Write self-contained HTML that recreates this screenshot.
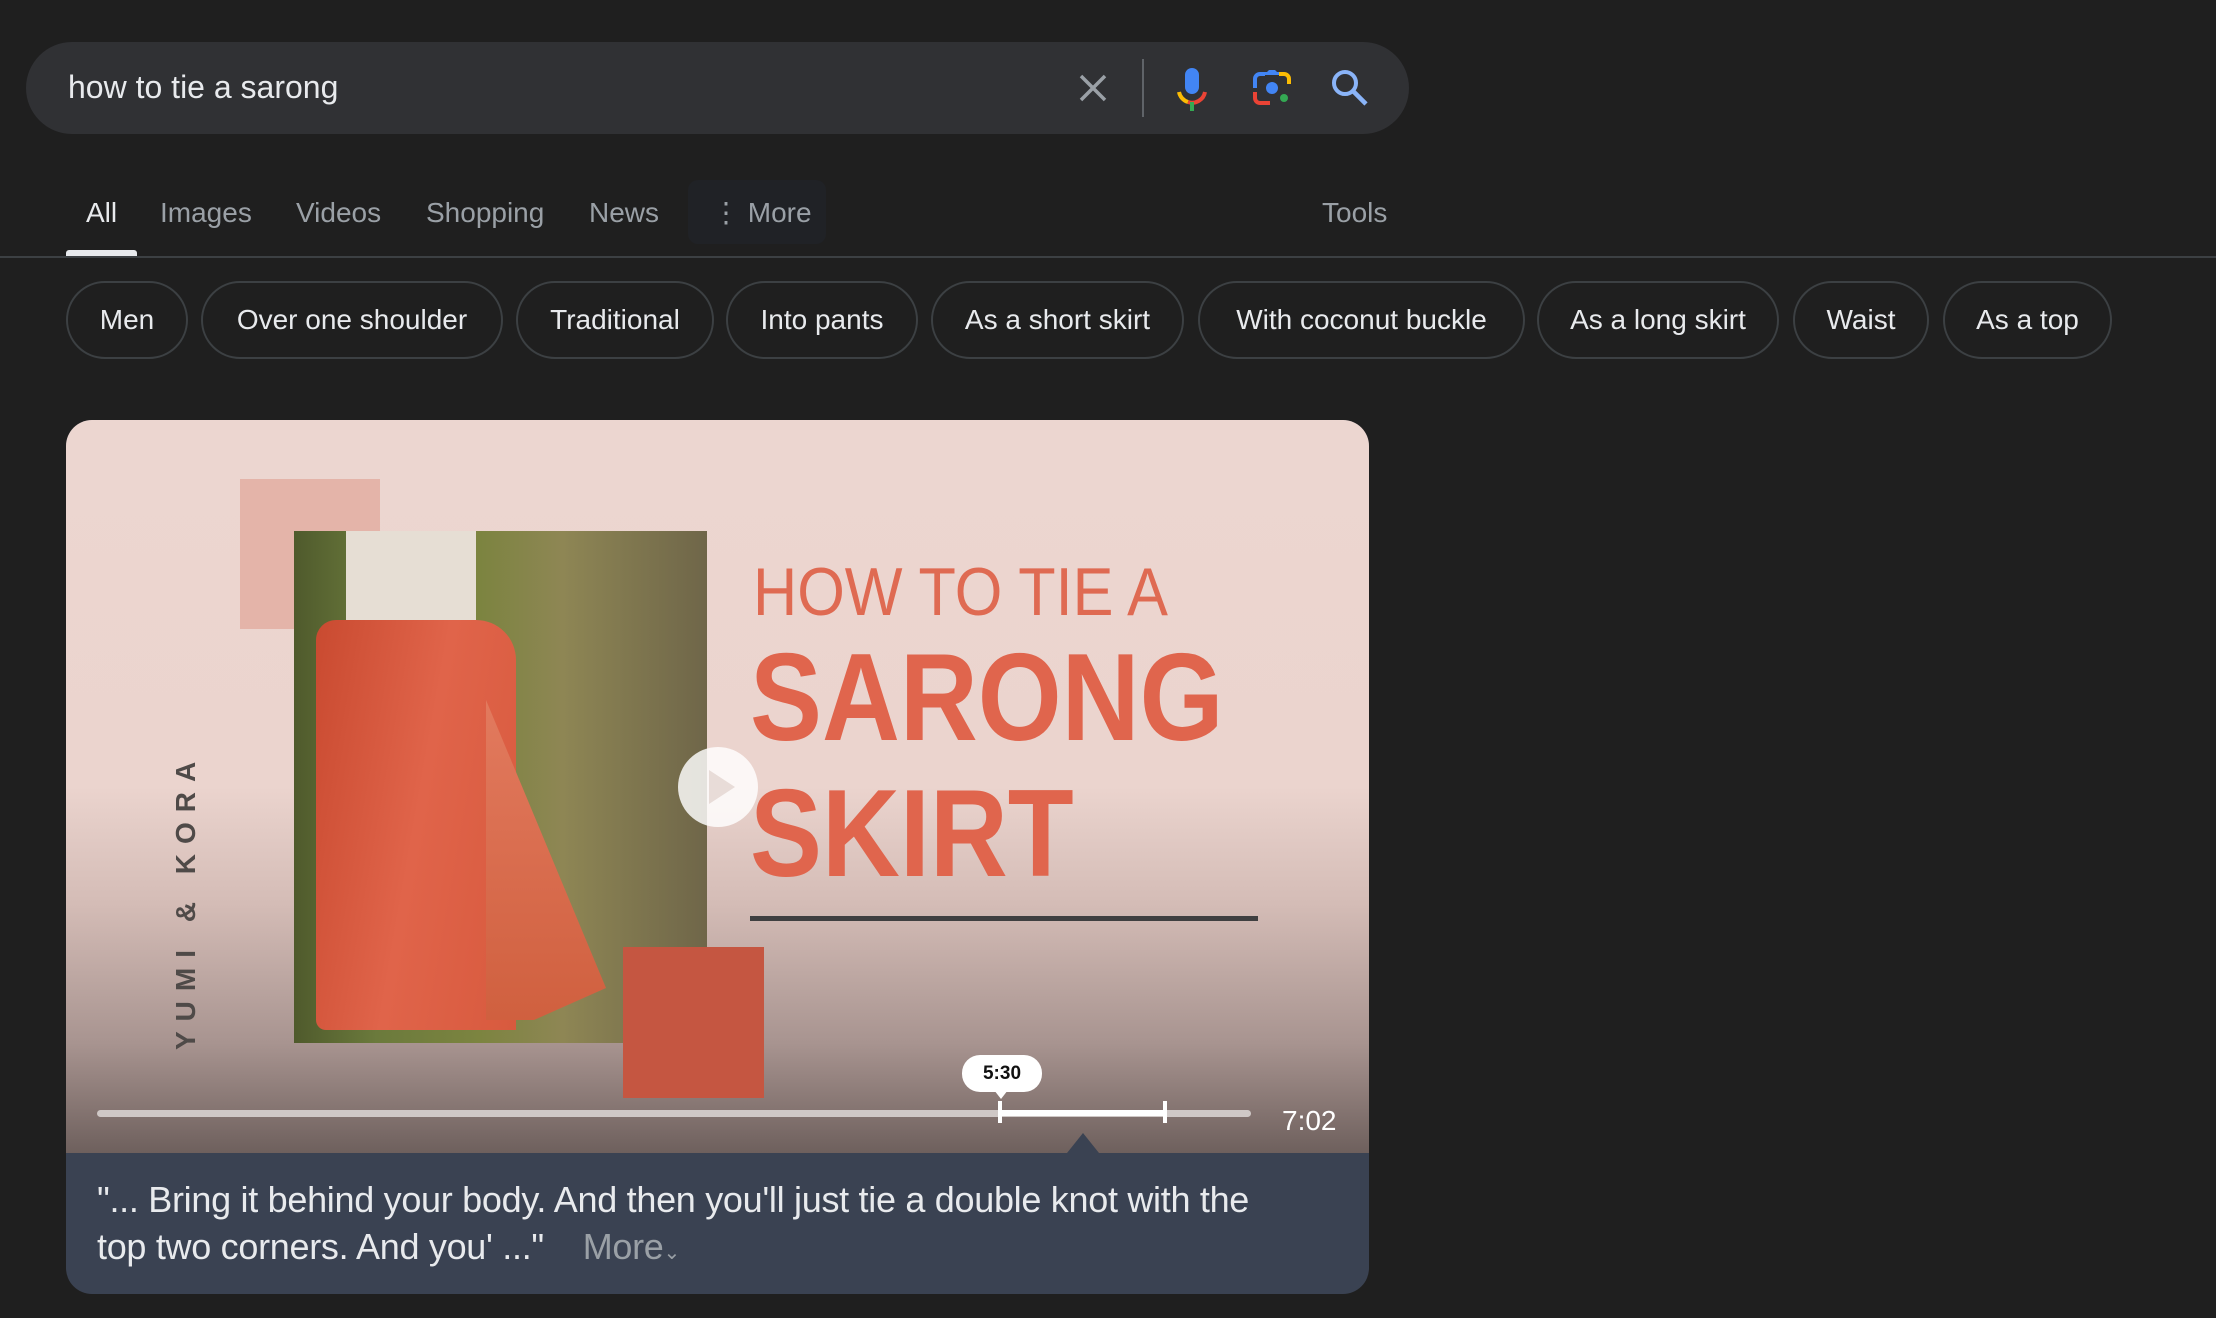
<!DOCTYPE html>
<html><head><meta charset="utf-8"><style>
*{box-sizing:border-box;margin:0;padding:0}
body{width:2216px;height:1318px;background:#1f1f1f;font-family:"Liberation Sans",Arial,sans-serif;position:relative;overflow:hidden;color:#e8eaed}
.abs{position:absolute}
.bar{left:26px;top:42px;width:1383px;height:92px;border-radius:46px;background:#303134}
.q{left:68px;top:66px;font-size:32px;color:#e8eaed;line-height:42px}
.tab{position:absolute;top:194px;font-size:28px;color:#9aa0a6;line-height:38px}
.chip{position:absolute;top:281px;height:78px;border:2px solid #3c4043;border-radius:39px;font-size:28px;color:#e8eaed;display:flex;align-items:center;justify-content:center}
</style></head><body>
<div class="abs bar"></div>
<div class="abs q">how to tie a sarong</div>
<svg class="abs" style="left:1077px;top:72px" width="32" height="32" viewBox="0 0 32 32"><path d="M4 4L28 28M28 4L4 28" stroke="#9aa0a6" stroke-width="3.5"/></svg>
<div class="abs" style="left:1142px;top:59px;width:2px;height:58px;background:#5f6368"></div>
<svg class="abs" style="left:1176px;top:66px" width="32" height="46" viewBox="0 0 32 46">
<rect x="9" y="2" width="14" height="26" rx="7" fill="#4285f4"/>
<path d="M3 26a13 13 0 0 0 9 10" stroke="#fbbc04" stroke-width="4" fill="none"/>
<path d="M12 36a13 13 0 0 0 17-10" stroke="#ea4335" stroke-width="4" fill="none"/>
<rect x="14" y="36" width="4" height="9" fill="#34a853"/></svg>
<svg class="abs" style="left:1252px;top:68px" width="40" height="40" viewBox="0 0 40 40">
<path d="M3 20V11a5 5 0 0 1 5-5h5" stroke="#4285f4" stroke-width="4" fill="none"/>
<path d="M13 6l4-4h6l4 4" fill="#4285f4"/><rect x="12" y="4" width="15" height="3" fill="#4285f4"/>
<path d="M27 6h5a5 5 0 0 1 5 5v5" stroke="#fbbc04" stroke-width="4" fill="none"/>
<path d="M3 24v6a5 5 0 0 0 5 5h10" stroke="#ea4335" stroke-width="4" fill="none"/>
<circle cx="20" cy="20" r="6" fill="#4285f4"/><circle cx="32" cy="30" r="4" fill="#34a853"/></svg>
<svg class="abs" style="left:1330px;top:68px" width="40" height="40" viewBox="0 0 40 40"><circle cx="15" cy="15" r="11" stroke="#8ab4f8" stroke-width="4" fill="none"/><path d="M23 23L36 36" stroke="#8ab4f8" stroke-width="4.5"/></svg>

<div class="tab" style="left:86px;color:#e8eaed">All</div>
<div class="tab" style="left:160px">Images</div>
<div class="tab" style="left:296px">Videos</div>
<div class="tab" style="left:426px">Shopping</div>
<div class="tab" style="left:589px">News</div>
<div class="abs" style="left:688px;top:180px;width:138px;height:64px;border-radius:10px;background:#202226"></div>
<div class="tab" style="left:712px">⋮ More</div>
<div class="tab" style="left:1322px">Tools</div>
<div class="abs" style="left:66px;top:250px;width:71px;height:6px;background:#e8eaed;border-radius:3px 3px 0 0"></div>
<div class="abs" style="left:0;top:256px;width:2216px;height:2px;background:#3c4043"></div>

<div class="chip" style="left:66px;width:122px">Men</div>
<div class="chip" style="left:201px;width:302px">Over one shoulder</div>
<div class="chip" style="left:516px;width:198px">Traditional</div>
<div class="chip" style="left:726px;width:192px">Into pants</div>
<div class="chip" style="left:931px;width:253px">As a short skirt</div>
<div class="chip" style="left:1198px;width:327px">With coconut buckle</div>
<div class="chip" style="left:1537px;width:242px">As a long skirt</div>
<div class="chip" style="left:1793px;width:136px">Waist</div>
<div class="chip" style="left:1943px;width:169px">As a top</div>

<div class="abs" style="left:66px;top:420px;width:1303px;height:874px;border-radius:26px;overflow:hidden;background:#3a4252">
 <div class="abs" style="left:0;top:0;width:1303px;height:733px;background:linear-gradient(#ecd6d0 0%,#ebd4ce 50%,#d4bcb6 66%,#a89490 85%,#6e605d 100%)"></div>
 <div class="abs" style="left:174px;top:59px;width:140px;height:150px;background:#e4b4a9"></div>
 <div class="abs" style="left:228px;top:111px;width:413px;height:512px;background:linear-gradient(90deg,#4f5a2c 0%,#6b7a3c 20%,#7c8440 45%,#8e8654 65%,#6f6649 100%)"></div>
 <div class="abs" style="left:280px;top:111px;width:130px;height:95px;background:#e6ded4"></div>
 <div class="abs" style="left:250px;top:200px;width:200px;height:410px;background:linear-gradient(100deg,#c94a30,#e0644a 50%,#d85a3e);border-radius:20px 40px 0 10px"></div>
 <div class="abs" style="left:420px;top:280px;width:120px;height:320px;background:linear-gradient(#e27a5e,#d0603f);clip-path:polygon(0 0,100% 90%,40% 100%,0 100%)"></div>
 <div class="abs" style="left:557px;top:527px;width:141px;height:151px;background:#c55641"></div>
 <div class="abs" style="left:687px;top:138px;font-size:68px;color:#df6a52;line-height:1;white-space:nowrap;transform:scaleX(.9);transform-origin:left">HOW TO TIE A</div>
 <div class="abs" style="left:684px;top:216px;font-size:124px;font-weight:bold;color:#e0654d;line-height:1;white-space:nowrap;transform:scaleX(.87);transform-origin:left">SARONG</div>
 <div class="abs" style="left:684px;top:352px;font-size:124px;font-weight:bold;color:#e0654d;line-height:1;white-space:nowrap;transform:scaleX(.87);transform-origin:left">SKIRT</div>
 <div class="abs" style="left:684px;top:496px;width:508px;height:5px;background:#3f3f40"></div>
 <div class="abs" style="left:104px;top:630px;width:310px;height:36px;transform:rotate(-90deg);transform-origin:0 0;font-size:28px;font-weight:bold;color:#4f4a48;letter-spacing:10px;white-space:nowrap">YUMI &amp; KORA</div>
 <div class="abs" style="left:612px;top:327px;width:80px;height:80px;border-radius:50%;background:rgba(255,255,255,.82)"></div>
 <div class="abs" style="left:643px;top:350px;width:0;height:0;border-left:26px solid #e8dcd8;border-top:17px solid transparent;border-bottom:17px solid transparent"></div>
 <div class="abs" style="left:31px;top:690px;width:1154px;height:7px;border-radius:4px;background:#cfc8c6"></div>
 <div class="abs" style="left:934px;top:690px;width:164px;height:6px;background:#fff"></div>
 <div class="abs" style="left:932px;top:681px;width:4px;height:22px;background:#fff"></div>
 <div class="abs" style="left:1097px;top:681px;width:4px;height:22px;background:#fff"></div>
 <div class="abs" style="left:896px;top:635px;width:80px;height:37px;border-radius:18px;background:#fff;color:#111;font-weight:bold;font-size:19px;display:flex;align-items:center;justify-content:center">5:30</div>
 <div class="abs" style="left:928px;top:670px;width:0;height:0;border-left:7px solid transparent;border-right:7px solid transparent;border-top:9px solid #fff"></div>
 <div class="abs" style="left:1216px;top:685px;font-size:28px;color:#fff">7:02</div>
 <div class="abs" style="left:1001px;top:713px;width:0;height:0;border-left:16px solid transparent;border-right:16px solid transparent;border-bottom:20px solid #3a4252"></div>
 <div class="abs" style="left:31px;top:756px;width:1180px;font-size:36px;line-height:47px;color:#e8eaed;letter-spacing:-.3px">"... Bring it behind your body. And then you'll just tie a double knot with the top two corners. And you' ..."&nbsp;&nbsp;&nbsp; <span style="color:#9aa0a6">More<span style="font-size:20px">⌄</span></span></div>
</div>
</body></html>
